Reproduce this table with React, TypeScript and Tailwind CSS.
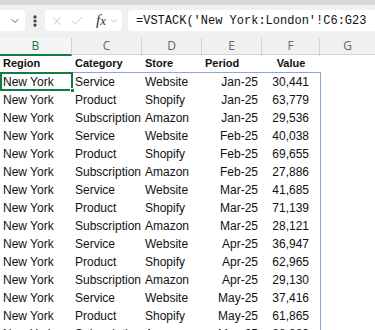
import { ChevronDown, X, Check, EllipsisVertical } from "lucide-react"

const rows = [
  ["Service", "Website", "Jan-25", "30,441"],
  ["Product", "Shopify", "Jan-25", "63,779"],
  ["Subscription", "Amazon", "Jan-25", "29,536"],
  ["Service", "Website", "Feb-25", "40,038"],
  ["Product", "Shopify", "Feb-25", "69,655"],
  ["Subscription", "Amazon", "Feb-25", "27,886"],
  ["Service", "Website", "Mar-25", "41,685"],
  ["Product", "Shopify", "Mar-25", "71,139"],
  ["Subscription", "Amazon", "Mar-25", "28,121"],
  ["Service", "Website", "Apr-25", "36,947"],
  ["Product", "Shopify", "Apr-25", "62,965"],
  ["Subscription", "Amazon", "Apr-25", "29,130"],
  ["Service", "Website", "May-25", "37,416"],
  ["Product", "Shopify", "May-25", "61,865"],
  ["Subscription", "Amazon", "May-25", "28,889"],
]

const cols = "grid grid-cols-[72px_70px_60px_60px_58px_1fr]"

export default function App() {
  return (
    <div className="w-[375px] h-[330px] overflow-hidden bg-white font-['Liberation_Sans',Arial,sans-serif] text-[12px] text-[#111]">
      <div className="h-[5px] bg-[#d9d9d9]" />

      {/* formula bar */}
      <div className="h-[33px] bg-[#f0f0f0] flex items-center pb-[2px]">
        <div className="w-[25px] h-[21px] bg-white rounded-r-[4px] flex items-center justify-end pr-[4px]">
          <ChevronDown className="size-[12px] text-[#555]" strokeWidth={2} />
        </div>
        <EllipsisVertical className="size-[14px] text-[#333] ml-[3px]" strokeWidth={3.5} />
        <div className="ml-[3px] w-[77px] h-[21px] bg-white rounded-[4px] flex items-center pl-[5px] gap-[6px]">
          <X className="size-[14px] text-[#b5b5b5]" strokeWidth={1.2} />
          <Check className="size-[14px] text-[#b5b5b5]" strokeWidth={1.2} />
          <span className="ml-[6px] font-['Liberation_Serif',serif] italic text-[15px] text-[#333] leading-none">
            f<span className="text-[13px]">x</span>
          </span>
          <ChevronDown className="size-[10px] text-[#999] -ml-[3px]" strokeWidth={1.5} />
        </div>
        <div className="ml-[6px] flex-1 h-[21px] bg-white rounded-l-[4px] flex items-center pl-[8px] font-['Liberation_Mono',monospace] text-[12px] text-[#111] whitespace-nowrap overflow-hidden">
          =VSTACK('New York:London'!C6:G23
        </div>
      </div>

      {/* column headers */}
      <div className={`${cols} h-[17px] bg-[#f0f0f0] border-b border-[#d4d4d4] text-[12px] text-[#666] leading-[16px] font-['Open_Sans',sans-serif]`}>
        <div className="text-center bg-[#f5f5f5] text-[#107c41] border-b-2 border-[#107c41] border-r border-r-[#d4d4d4]">B</div>
        <div className="text-center border-r border-[#d4d4d4]">C</div>
        <div className="text-center border-r border-[#d4d4d4]">D</div>
        <div className="text-center border-r border-[#d4d4d4]">E</div>
        <div className="text-center border-r border-[#d4d4d4]">F</div>
        <div className="text-center">G</div>
      </div>

      {/* header row */}
      <div className={`${cols} h-[17px] items-center font-bold text-[11px] text-[#111]`}>
        <div className="pl-[3px]">Region</div>
        <div className="pl-[3px]">Category</div>
        <div className="pl-[3px]">Store</div>
        <div className="pl-[3px]">Period</div>
        <div className="text-center">Value</div>
        <div />
      </div>

      {/* data */}
      <div className="relative w-[321px] border-t border-r border-[#8aa6da]">
        {rows.map((r, i) => (
          <div key={i} className={`${cols} h-[18px] items-center leading-[18px]`}>
            <div className="pl-[3px] whitespace-nowrap">New York</div>
            <div className="pl-[3px] whitespace-nowrap">{r[0]}</div>
            <div className="pl-[3px] whitespace-nowrap">{r[1]}</div>
            <div className="pr-[4px] text-right">{r[2]}</div>
            <div className="pr-[11px] text-right">{r[3]}</div>
          </div>
        ))}
        <div className="absolute left-0 top-[-1px] w-[73px] h-[19px] border-2 border-[#107c41]">
          <div className="absolute -right-[4px] -bottom-[4px] size-[5px] bg-[#107c41] border border-white" />
        </div>
      </div>
    </div>
  )
}
